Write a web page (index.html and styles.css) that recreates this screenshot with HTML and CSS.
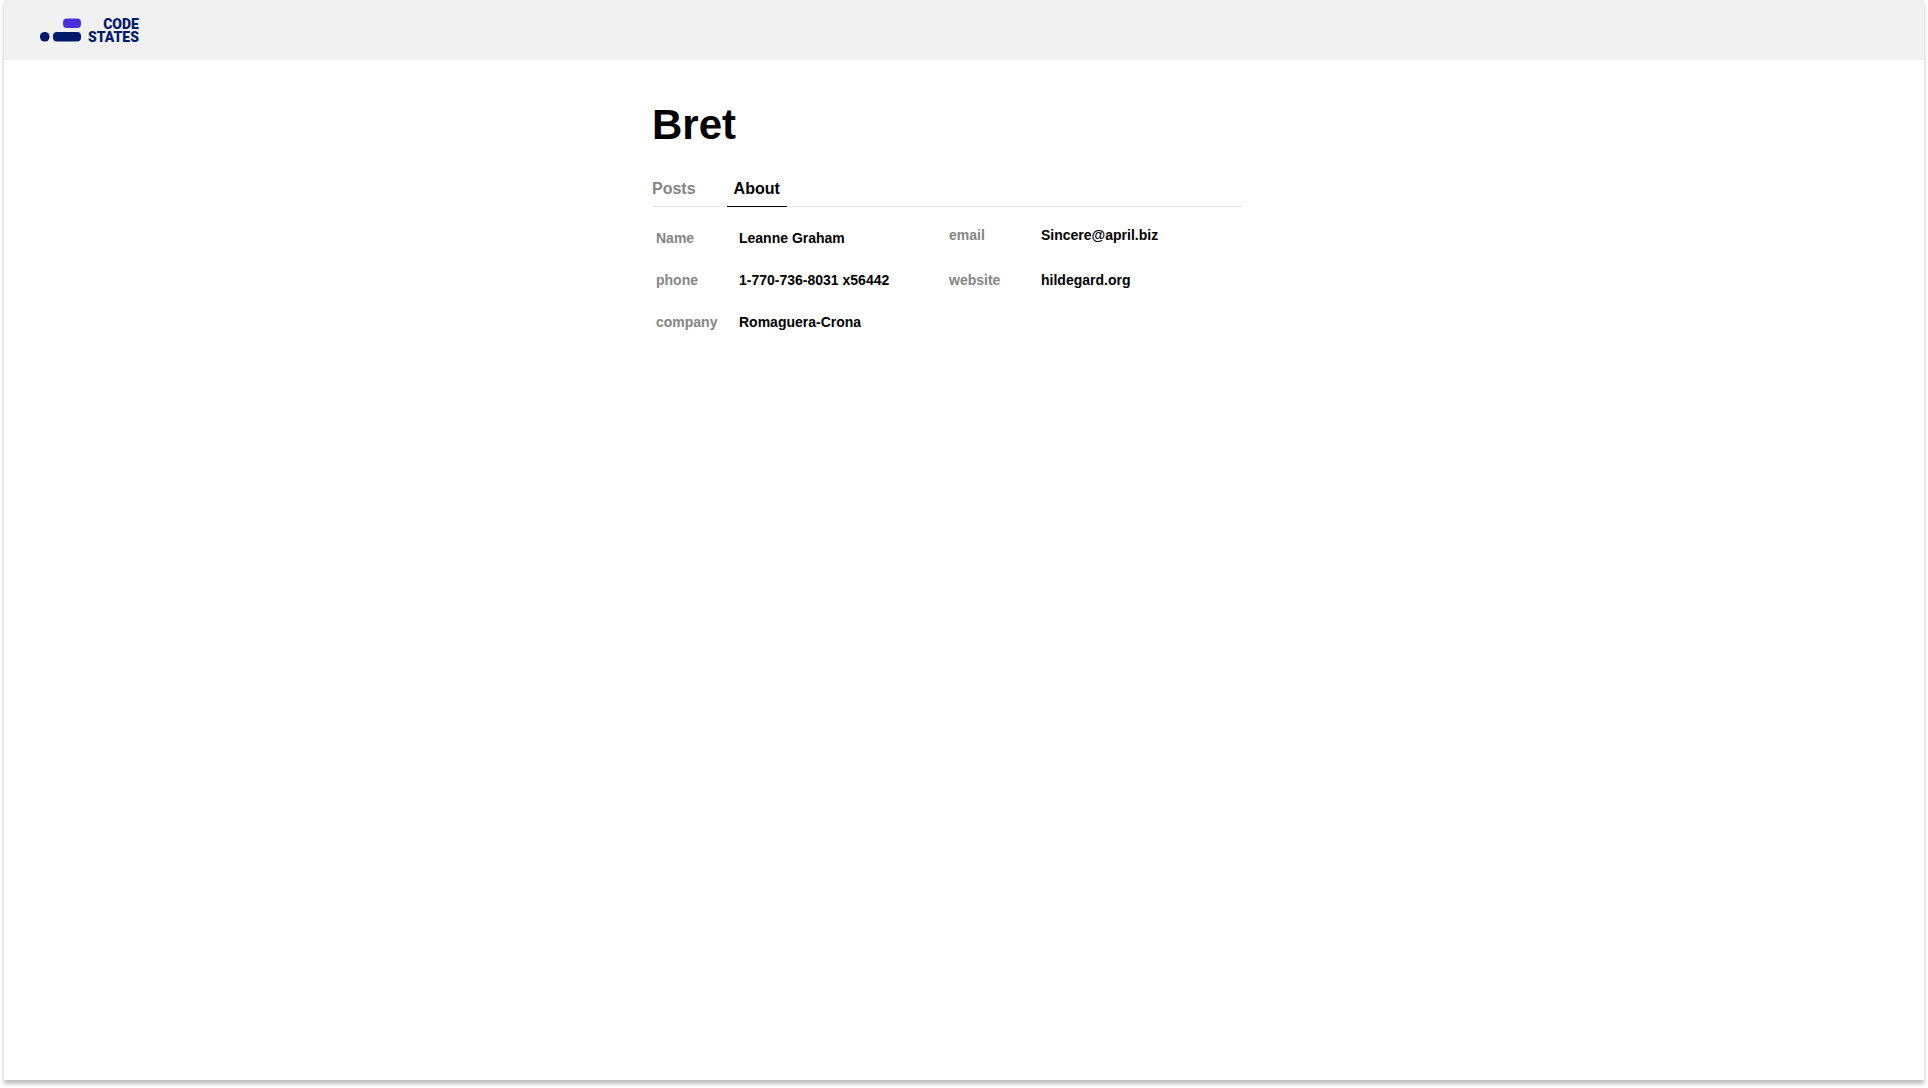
FILE: index.html
```html
<!DOCTYPE html>
<html lang="en">
<head>
<meta charset="utf-8">
<meta name="viewport" content="width=device-width, initial-scale=1">
<title>Bret</title>
<link rel="stylesheet" href="styles.css">
</head>
<body>
<div class="page">
  <header class="topbar">
    <a class="logo" href="#">
      <svg class="logo-mark" width="42" height="24" viewBox="0 0 42 24" aria-hidden="true">
        <rect class="mark-accent" x="23" y="0.5" width="18" height="9.5" rx="4"/>
        <rect x="0" y="14" width="9.5" height="9.5" rx="4.5"/>
        <rect x="13" y="14" width="28" height="9.5" rx="4"/>
      </svg>
      <span class="logo-name">CODE<br>STATES</span>
    </a>
  </header>
  <main class="profile">
    <h1 class="username">Bret</h1>
    <nav class="tabs">
      <button class="tab" type="button">Posts</button>
      <button class="tab tab-active" type="button">About</button>
    </nav>
    <div class="about">
      <dl class="details">
        <dt>Name</dt><dd>Leanne Graham</dd>
        <dt>phone</dt><dd>1-770-736-8031 x56442</dd>
        <dt>company</dt><dd>Romaguera-Crona</dd>
      </dl>
      <dl class="details details-contact">
        <dt>email</dt><dd>Sincere@april.biz</dd>
        <dt>website</dt><dd>hildegard.org</dd>
      </dl>
    </div>
  </main>
</div>
</body>
</html>
```
FILE: styles.css
```css
* {
  box-sizing: border-box;
}

body {
  margin: 0;
  padding: 0 4px 8px;
  background: #fff;
  color: #000;
  font-family: "Liberation Sans", Arial, sans-serif;
}

.page {
  min-height: calc(100vh - 8px);
  background: #fff;
  box-shadow: 0 4px 4px rgba(0, 0, 0, 0.25);
}

.topbar {
  display: flex;
  align-items: center;
  height: 60px;
  padding: 0 36px;
  background: #f1f1f1;
}

.logo {
  display: flex;
  align-items: center;
  gap: 6px;
  color: #001a6b;
  text-decoration: none;
}

.logo-mark {
  fill: currentColor;
}

.logo-mark .mark-accent {
  fill: #4830dc;
}

.logo-name {
  padding-top: 2px;
  font-family: Roboto, "Liberation Sans", sans-serif;
  font-size: 14px;
  font-weight: 900;
  line-height: 13px;
  text-align: right;
}

.profile {
  max-width: 590px;
  margin-left: calc(50% - 312px);
  padding-top: 41px;
}

.username {
  margin: 0;
  font-size: 42px;
  font-weight: 700;
  line-height: 48px;
}

.tabs {
  display: flex;
  gap: 31px;
  margin-top: 23px;
  border-bottom: 1px solid #e3e3e3;
}

.tab {
  margin-bottom: -1px;
  padding: 8px 0;
  border: 0;
  border-bottom: 1px solid transparent;
  background: none;
  color: #858585;
  font: inherit;
  font-size: 16px;
  font-weight: 700;
  line-height: 18px;
  cursor: pointer;
}

.tab-active {
  padding: 8px 7px;
  border-bottom-color: #000;
  color: #000;
}

.about {
  display: flex;
  align-items: flex-start;
  padding: 18px 0 0 4px;
}

.details {
  display: grid;
  grid-template-columns: 83px 210px;
  row-gap: 24px;
  margin: 4px 0 0;
  font-size: 14px;
  font-weight: 700;
  line-height: 18px;
}

.details-contact {
  grid-template-columns: 92px auto;
  row-gap: 27px;
  margin-top: 1px;
}

.details dt {
  color: #858585;
}

.details dd {
  margin: 0;
}
```
